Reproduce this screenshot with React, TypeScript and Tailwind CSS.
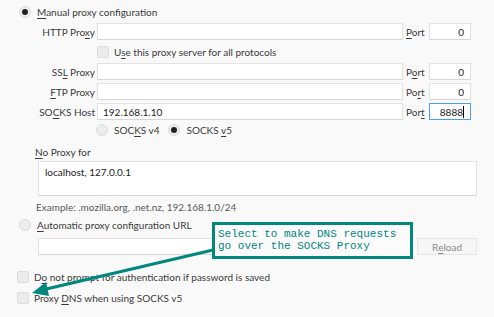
import React from "react";

const font = { fontFamily: "Lato, 'Open Sans', sans-serif" };

const Radio = ({ checked }: { checked?: boolean }) => (
  <span className="w-[12px] h-[12px] rounded-full border border-[#dcdcdc] bg-[#ececec] flex items-center justify-center shrink-0">
    {checked && <span className="w-[6px] h-[6px] rounded-full bg-[#222]" />}
  </span>
);

const Check = () => (
  <span className="w-[12px] h-[12px] rounded-[2px] border border-[#dcdcdc] bg-[#ececec] shrink-0" />
);

const U = ({ children }: { children: React.ReactNode }) => (
  <span className="underline underline-offset-2">{children}</span>
);

const ProxyRow = ({
  label,
  host,
  port,
  focused,
}: {
  label: React.ReactNode;
  host?: string;
  port: React.ReactNode;
  focused?: boolean;
}) => (
  <div className="flex items-center h-[17px]">
    <div className="w-[97px] text-right pr-[2px]">{label}</div>
    <div className="w-[306px] h-[17px] bg-white border border-[#e2e2e2] border-b-[#d6d6d6] px-[5px] flex items-center text-[#222]">
      {host}
    </div>
    <div className="w-[26px] pl-[3px]">{port}</div>
    <div
      className={`w-[42px] h-[17px] bg-white border flex items-center justify-end pr-[6px] text-[#222] ${
        focused ? "border-[#4a9ff5]" : "border-[#e2e2e2] border-b-[#d6d6d6]"
      }`}
    >
      {focused ? (
        <span className="flex items-center">
          8888<span className="w-px h-[12px] bg-black" />
        </span>
      ) : (
        "0"
      )}
    </div>
  </div>
);

export default function App() {
  return (
    <div
      className="relative w-[494px] h-[317px] bg-[#f9f9f9] text-[10px] leading-[14px] text-[#3a3a3a] overflow-hidden"
      style={font}
    >
      <div className="flex flex-col pt-[5px]">
        <div className="flex items-center gap-[6px] pl-[19px] h-[14px]">
          <Radio checked />
          <span>
            <U>M</U>anual proxy configuration
          </span>
        </div>

        <div className="mt-[4px]">
          <ProxyRow
            label={
              <>
                HTTP Pro<U>x</U>y
              </>
            }
            port={
              <>
                <U>P</U>ort
              </>
            }
          />
        </div>

        <div className="flex items-center gap-[5px] pl-[97px] mt-[6px] h-[12px]">
          <Check />
          <span>
            U<U>s</U>e this proxy server for all protocols
          </span>
        </div>

        <div className="flex flex-col gap-[3px] mt-[5px]">
          <ProxyRow
            label={
              <>
                SS<U>L</U> Proxy
              </>
            }
            port={
              <>
                P<U>o</U>rt
              </>
            }
          />
          <ProxyRow
            label={
              <>
                <U>F</U>TP Proxy
              </>
            }
            port={
              <>
                Po<U>r</U>t
              </>
            }
          />
          <ProxyRow
            label={
              <>
                SO<U>C</U>KS Host
              </>
            }
            host="192.168.1.10"
            port={
              <>
                Por<U>t</U>
              </>
            }
            focused
          />
        </div>

        <div className="flex items-center pl-[96px] mt-[3px] h-[14px]">
          <Radio />
          <span className="ml-[6px]">
            SOC<U>K</U>S v4
          </span>
          <span className="ml-[9px]">
            <Radio checked />
          </span>
          <span className="ml-[6px]">
            SOCKS <U>v</U>5
          </span>
        </div>

        <div className="pl-[35px] mt-[8px] h-[14px]">
          <U>N</U>o Proxy for
        </div>

        <div className="ml-[38px] mt-[2px] w-[439px] h-[35px] bg-white border border-[#e2e2e2] border-b-[#d6d6d6] pl-[6px] pt-[3px] text-[#222]">
          localhost, 127.0.0.1
        </div>

        <div className="pl-[36px] mt-[4px] h-[14px] text-[#5a5a5a]">
          Example: .mozilla.org, .net.nz, 192.168.1.0/24
        </div>

        <div className="flex items-center gap-[6px] pl-[19px] mt-[4px] h-[14px]">
          <Radio />
          <span>
            <U>A</U>utomatic proxy configuration URL
          </span>
        </div>

        <div className="flex items-center ml-[38px] mt-[6px] gap-[4px]">
          <div className="w-[375px] h-[17px] bg-white border border-[#e2e2e2] border-b-[#d6d6d6]" />
          <div className="w-[60px] h-[17px] bg-[#f6f6f6] border border-[#e6e6e6] flex items-center justify-center text-[#8a8a8a]">
            R<U>e</U>load
          </div>
        </div>

        <div className="flex items-center gap-[5px] pl-[17px] mt-[15px] h-[13px]">
          <Check />
          <span>
            D<U>o</U> not prompt for authentication if password is saved
          </span>
        </div>

        <div className="flex items-center gap-[5px] pl-[17px] mt-[8px] h-[13px]">
          <Check />
          <span>
            Proxy <U>D</U>NS when using SOCKS v5
          </span>
        </div>
      </div>

      <svg className="absolute left-0 top-0" width="494" height="317">
        <line x1="213" y1="250" x2="42" y2="290" stroke="#00877e" strokeWidth="3" />
        <polygon points="32,293 46,282 49,296" fill="#00877e" />
      </svg>

      <div
        className="absolute left-[212px] top-[222px] w-[201px] h-[37px] border-[3px] border-[#00877e] bg-[#fbfbfb] pl-[3px] pt-[3px] text-[#00877e] text-[11px] leading-[12px]"
        style={{ fontFamily: "'Liberation Mono', monospace" }}
      >
        Select to make DNS requests
        <br />
        go over the SOCKS Proxy
      </div>
    </div>
  );
}
